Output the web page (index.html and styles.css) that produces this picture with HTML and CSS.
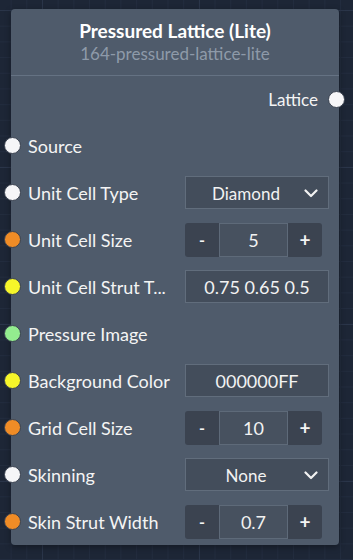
FILE: index.html
```html
<!DOCTYPE html>
<html lang="en">
<head>
    <meta charset="UTF-8">
    <meta name="viewport" content="width=device-width, initial-scale=1.0">
    <title>Pressured Lattice (Lite)</title>
    <link rel="stylesheet" href="styles.css">
</head>
<body>
    <div class="canvas">
        <div class="node">
            <div class="node-header">
                <div class="node-title">Pressured Lattice (Lite)</div>
                <div class="node-id">164-pressured-lattice-lite</div>
            </div>

            <div class="node-body">
                <div class="row output">
                    <span class="label">Lattice</span>
                    <span class="handle right white"></span>
                </div>

                <div class="row">
                    <span class="handle left white"></span>
                    <span class="label">Source</span>
                </div>

                <div class="row">
                    <span class="handle left white"></span>
                    <span class="label">Unit Cell Type</span>
                    <div class="select">
                        <span class="select-value">Diamond</span>
                        <svg class="chevron" width="14" height="9" viewBox="0 0 14 9"><path d="M1.5 1.5 L7 7 L12.5 1.5" fill="none" stroke="#f2f2f2" stroke-width="2.2" stroke-linecap="round" stroke-linejoin="round"/></svg>
                    </div>
                </div>

                <div class="row">
                    <span class="handle left orange"></span>
                    <span class="label">Unit Cell Size</span>
                    <div class="stepper">
                        <span class="step-btn minus">-</span>
                        <span class="step-value">5</span>
                        <span class="step-btn plus">+</span>
                    </div>
                </div>

                <div class="row">
                    <span class="handle left yellow"></span>
                    <span class="label">Unit Cell Strut T...</span>
                    <div class="text-input">0.75 0.65 0.5</div>
                </div>

                <div class="row">
                    <span class="handle left green"></span>
                    <span class="label">Pressure Image</span>
                </div>

                <div class="row">
                    <span class="handle left yellow"></span>
                    <span class="label">Background Color</span>
                    <div class="text-input">000000FF</div>
                </div>

                <div class="row">
                    <span class="handle left orange"></span>
                    <span class="label">Grid Cell Size</span>
                    <div class="stepper">
                        <span class="step-btn minus">-</span>
                        <span class="step-value">10</span>
                        <span class="step-btn plus">+</span>
                    </div>
                </div>

                <div class="row">
                    <span class="handle left white"></span>
                    <span class="label">Skinning</span>
                    <div class="select">
                        <span class="select-value">None</span>
                        <svg class="chevron" width="14" height="9" viewBox="0 0 14 9"><path d="M1.5 1.5 L7 7 L12.5 1.5" fill="none" stroke="#f2f2f2" stroke-width="2.2" stroke-linecap="round" stroke-linejoin="round"/></svg>
                    </div>
                </div>

                <div class="row">
                    <span class="handle left orange"></span>
                    <span class="label">Skin Strut Width</span>
                    <div class="stepper">
                        <span class="step-btn minus">-</span>
                        <span class="step-value">0.7</span>
                        <span class="step-btn plus">+</span>
                    </div>
                </div>
            </div>
        </div>
    </div>
</body>
</html>
```

FILE: styles.css
```css
* {
    margin: 0;
    padding: 0;
    box-sizing: border-box;
}

body {
    font-family: Lato, 'Noto Sans', sans-serif;
    color: #f2f2f2;
    background-color: #1d2636;
    background-image:
        linear-gradient(to right, #2a3549 1px, transparent 1px),
        linear-gradient(to bottom, #2a3549 1px, transparent 1px),
        linear-gradient(to right, #222c3e 1px, transparent 1px),
        linear-gradient(to bottom, #222c3e 1px, transparent 1px);
    background-size: 157px 157px, 157px 157px, 15.7px 15.7px, 15.7px 15.7px;
    background-position: 42px 10px, 42px 10px, 10.6px 10px, 10.6px 10px;
    height: 560px;
    overflow: hidden;
}

.canvas {
    padding: 9px 0 0 11px;
}

.node {
    position: relative;
    width: 328px;
    background: #4f5b6b;
    border-radius: 4px;
    box-shadow: 0 2px 6px rgba(0, 0, 0, 0.35);
}

.node-header {
    height: 67px;
    border-bottom: 1px solid #657283;
    text-align: center;
    padding-top: 10px;
}

.node-title {
    font-weight: bold;
    font-size: 19px;
    line-height: 23px;
    color: #ffffff;
}

.node-id {
    font-size: 17px;
    line-height: 24px;
    color: #8e9aa9;
}

.row {
    position: relative;
    height: 47px;
    display: flex;
    align-items: center;
    padding: 0 10px 0 17px;
}

.row:nth-child(2) {
    margin-top: -1px;
}

.row.output {
    justify-content: flex-end;
    padding-right: 21px;
}

.label {
    flex: 1;
    font-size: 18px;
    white-space: nowrap;
    color: #f4f4f4;
}

.row.output .label {
    flex: none;
    font-size: 17px;
}

.handle {
    position: absolute;
    top: 50%;
    width: 17px;
    height: 17px;
    margin-top: -9px;
    border-radius: 50%;
    border: 1px solid #3a4250;
}

.handle.left {
    left: -7px;
}

.handle.right {
    right: -6px;
}

.handle.white { background: #f6f6f8; }
.handle.orange { background: #f08c26; }
.handle.yellow { background: #f6f62a; }
.handle.green { background: #93ec8f; }

.select,
.text-input {
    width: 144px;
    height: 33px;
    background: #434d5b;
    border: 1px solid #616d7c;
    font-size: 17px;
    display: flex;
    align-items: center;
    justify-content: center;
}

.text-input {
    font-size: 18px;
}

.select {
    position: relative;
    padding-right: 22px;
    padding-top: 2px;
}

.chevron {
    position: absolute;
    right: 10px;
    top: 12px;
}

.stepper {
    width: 137px;
    height: 34px;
    margin-right: 7px;
    display: flex;
    border-radius: 3px;
    overflow: hidden;
    background: #3b4350;
}

.step-btn {
    width: 34px;
    display: flex;
    align-items: center;
    justify-content: center;
    font-size: 19px;
    font-weight: bold;
    color: #f4f4f4;
}

.step-btn.minus {
    font-size: 16px;
}

.step-value {
    flex: 1;
    display: flex;
    align-items: center;
    justify-content: center;
    background: #47515f;
    border: 1px solid #5e6a79;
    font-size: 18px;
}
```
